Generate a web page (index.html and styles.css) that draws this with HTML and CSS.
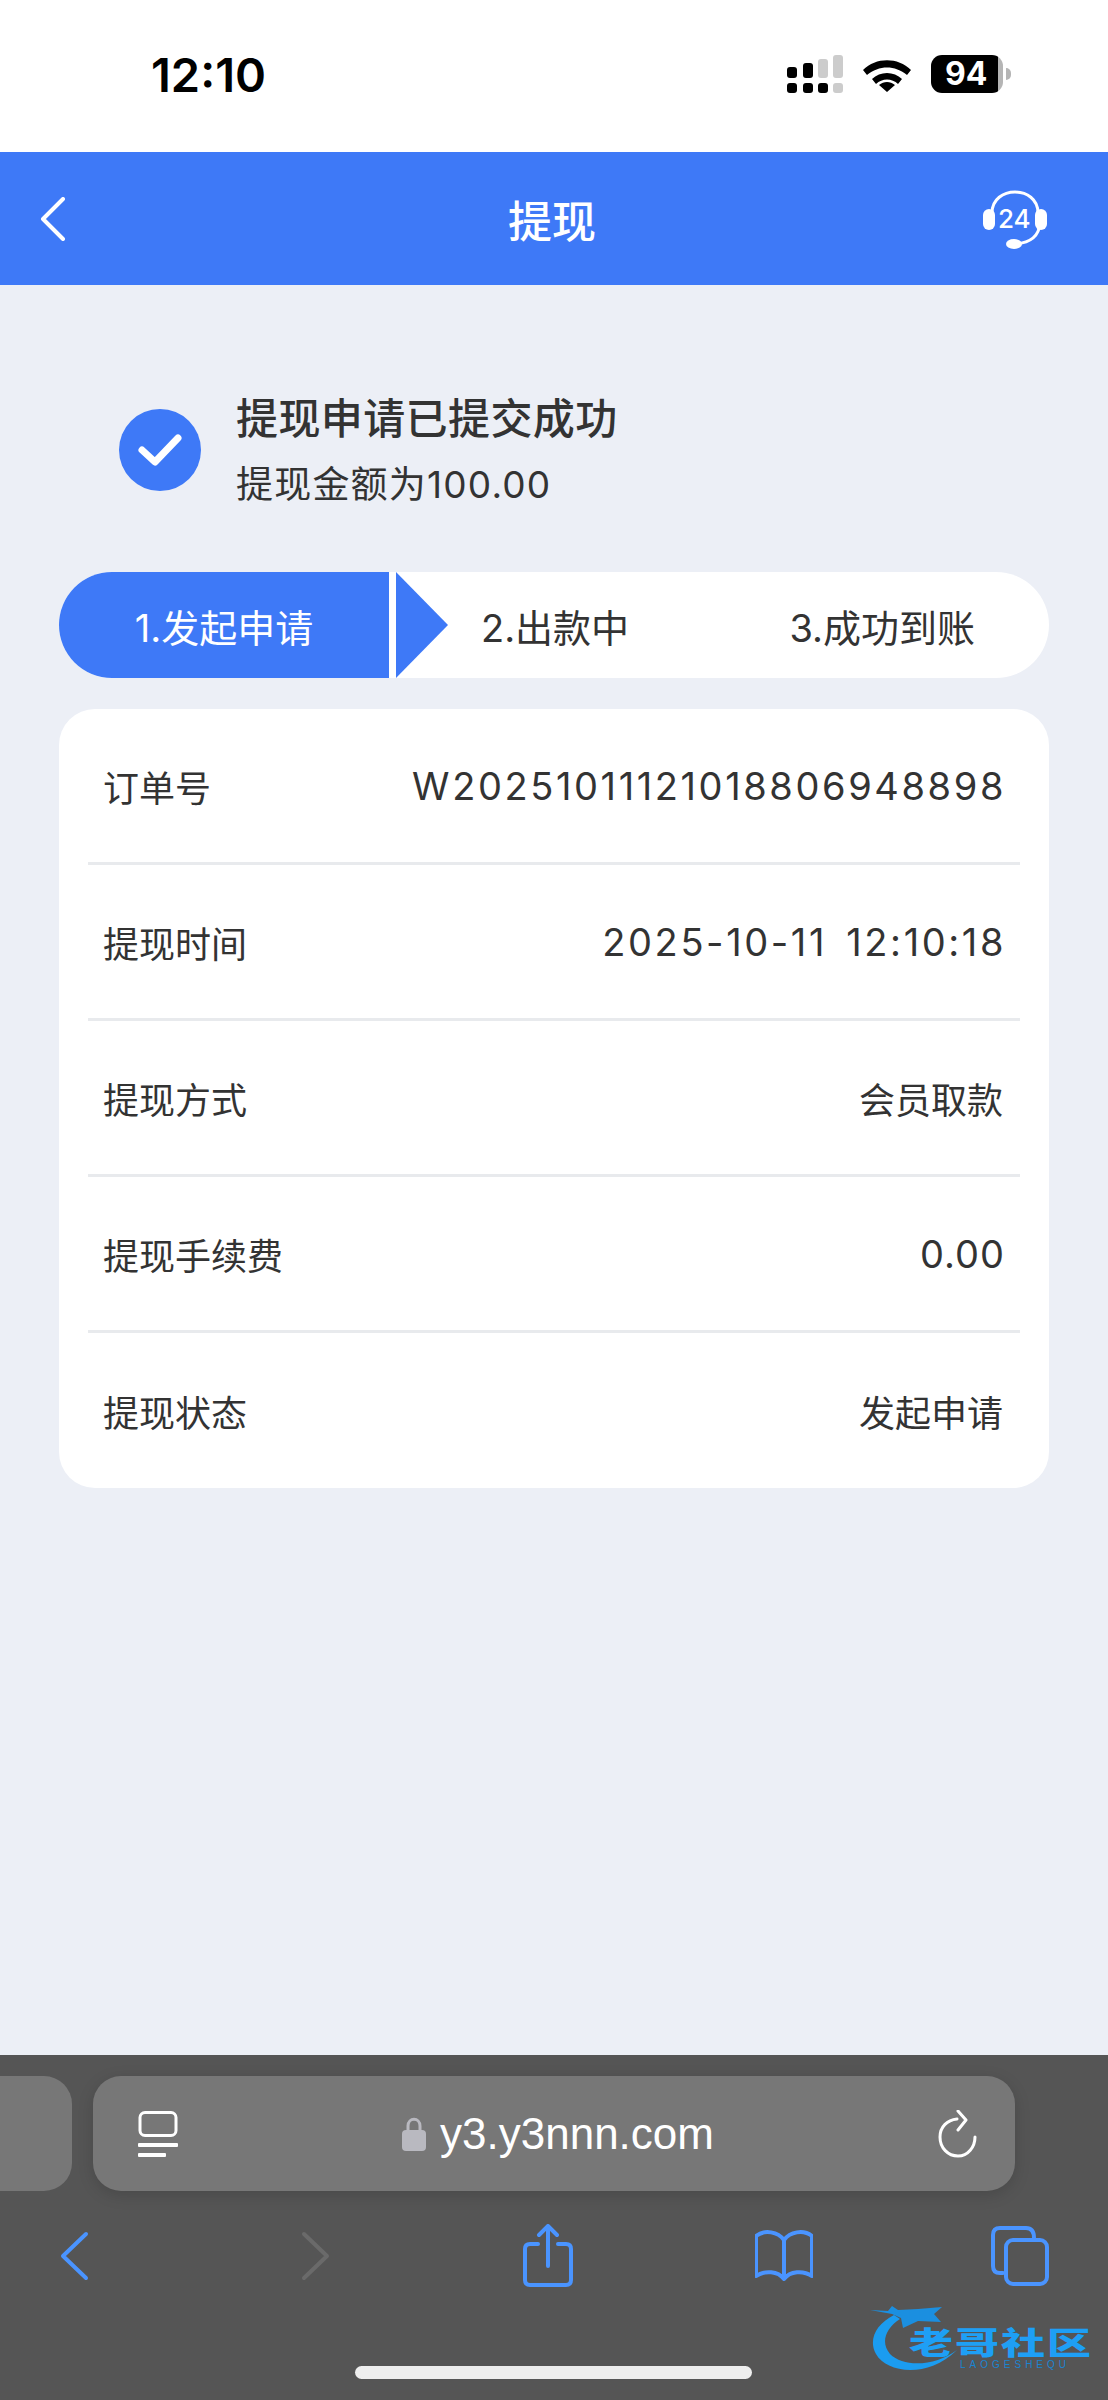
FILE: index.html
```html
<!DOCTYPE html>
<html lang="zh-CN">
<head>
    <meta charset="UTF-8">
    <meta name="viewport" content="width=device-width, initial-scale=1.0">
    <title>提现</title>
    <link rel="stylesheet" href="styles.css">
</head>
<body>
    <div class="status-bar">
        <div class="time">12:10</div>
        <div class="status-icons">
            <svg class="signal" width="56" height="38" viewBox="0 0 56 38">
                <g fill="#000">
                    <rect x="0" y="12" width="10" height="11" rx="3"/>
                    <rect x="16" y="8" width="10" height="15" rx="3"/>
                    <rect x="0" y="28" width="10" height="10" rx="3"/>
                    <rect x="16" y="28" width="10" height="10" rx="3"/>
                    <rect x="31" y="28" width="10" height="10" rx="3"/>
                </g>
                <g fill="#ccc">
                    <rect x="31" y="4" width="10" height="19" rx="3"/>
                    <rect x="46" y="0" width="10" height="23" rx="3"/>
                    <rect x="46" y="28" width="10" height="10" rx="3"/>
                </g>
            </svg>
            <svg class="wifi" width="50" height="36" viewBox="0 0 50 36">
                <path d="M1 14 C14 1 36 1 49 14 L45 19 C33 9 17 9 5 19Z M10 23 C18 15 32 15 40 23 L36 28 C30 22 20 22 14 28Z M17 29 C22 25 28 25 33 29 L25 36Z" fill="#000"/>
            </svg>
            <div class="battery">
                <div class="battery-body">94</div>
                <div class="battery-nub"></div>
            </div>
        </div>
    </div>

    <div class="nav-bar">
        <svg width="26" height="44" viewBox="0 0 26 44">
            <path d="M23 2 L3 22 L23 42" fill="none" stroke="#fff" stroke-width="4" stroke-linecap="round" stroke-linejoin="round"/>
        </svg>
        <div class="nav-title">提现</div>
        <div class="service">
            <svg width="64" height="64" viewBox="0 0 64 64">
                <path d="M9 26 C9 -2 55 -2 55 26" fill="none" stroke="#fff" stroke-width="3"/>
                <path d="M57 36 C56 50 46 56 32 57" fill="none" stroke="#fff" stroke-width="3"/>
                <rect x="0" y="22" width="12" height="21" rx="6" fill="#fff"/>
                <rect x="52" y="22" width="12" height="21" rx="6" fill="#fff"/>
                <ellipse cx="31" cy="57" rx="8" ry="5" fill="#fff"/>
            </svg>
            <span class="service-num">24</span>
        </div>
    </div>

    <div class="page">
        <div class="result">
            <div class="result-icon">
                <svg width="46" height="34" viewBox="0 0 46 34">
                    <path d="M5 17 L18 29 L41 5" fill="none" stroke="#fff" stroke-width="7" stroke-linecap="round" stroke-linejoin="round"/>
                </svg>
            </div>
            <div class="result-text">
                <div class="result-title">提现申请已提交成功</div>
                <div class="result-amount">提现金额为100.00</div>
            </div>
        </div>

        <div class="steps">
            <div class="step-active">1.发起申请</div>
            <div class="step-arrow"></div>
            <div class="step-two">2.出款中</div>
            <div class="step-three">3.成功到账</div>
        </div>

        <div class="card">
            <div class="row"><span>订单号</span><span class="num">W20251011121018806948898</span></div>
            <div class="row"><span>提现时间</span><span class="num">2025-10-11 12:10:18</span></div>
            <div class="row"><span>提现方式</span><span>会员取款</span></div>
            <div class="row"><span>提现手续费</span><span class="num-short">0.00</span></div>
            <div class="row"><span>提现状态</span><span>发起申请</span></div>
        </div>
    </div>

    <div class="browser">
        <div class="address-row">
            <div class="prev-tab"></div>
            <div class="address">
                <svg width="40" height="46" viewBox="0 0 40 46">
                    <rect x="2" y="1.5" width="36" height="23" rx="5" fill="none" stroke="#fff" stroke-width="3"/>
                    <rect x="0" y="32" width="40" height="4" rx="1" fill="#fff"/>
                    <rect x="0" y="42" width="28" height="4" rx="1" fill="#fff"/>
                </svg>
                <div class="url">
                    <svg width="24" height="34" viewBox="0 0 24 34">
                        <path d="M6 15 V9 C6 0 18 0 18 9 V15" fill="none" stroke="#b9b9c0" stroke-width="3"/>
                        <rect x="0" y="13" width="24" height="21" rx="4" fill="#b9b9c0"/>
                    </svg>
                    <span>y3.y3nnn.com</span>
                </div>
                <svg width="40" height="48" viewBox="0 0 40 48">
                    <path d="M37 27 C37 37 30 46 20 46 C10 46 2 38 2 27 C2 17 9 10 19 9" fill="none" stroke="#fff" stroke-width="3" stroke-linecap="round"/>
                    <path d="M20 1 L28 10 L20 20" fill="none" stroke="#fff" stroke-width="3" stroke-linecap="round" stroke-linejoin="round"/>
                </svg>
            </div>
        </div>
        <div class="toolbar">
            <svg width="58" height="64" viewBox="0 0 58 64">
                <path d="M41 10 L18 32 L41 54" class="tool-line"/>
            </svg>
            <svg width="58" height="64" viewBox="0 0 58 64">
                <path d="M22 10 L45 32 L22 54" class="tool-line tool-off"/>
            </svg>
            <svg width="58" height="64" viewBox="0 0 58 64">
                <path d="M20 20 H12 Q7 20 7 25 V56 Q7 61 12 61 H48 Q53 61 53 56 V25 Q53 20 48 20 H40" class="tool-line"/>
                <path d="M30 42 V2 M21 11 L30 2 L39 11" class="tool-line"/>
            </svg>
            <svg width="58" height="64" viewBox="0 0 58 64">
                <path d="M29 16 C23 8 10 5 1 12 V52 C10 46 23 47 29 55 C35 47 48 46 57 52 V12 C48 5 35 8 29 16 Z M29 16 V55" class="tool-line"/>
            </svg>
            <svg width="58" height="64" viewBox="0 0 58 64">
                <path d="M12 49 H9 Q2 49 2 42 V11 Q2 4 9 4 H35 Q43 4 43 14" class="tool-line"/>
                <rect x="15" y="16" width="41" height="44" rx="7" class="tool-line"/>
            </svg>
        </div>
        <div class="home-bar"></div>
        <div class="watermark">
            <svg width="90" height="76" viewBox="0 0 90 76">
                <path d="M26 15 C8 24 0 40 8 54 C18 72 58 80 89 50 C68 66 36 68 22 54 C12 42 18 28 32 19Z" fill="#1b9cf0"/>
                <path d="M2 10 L20 11 L24 6 L30 10 L50 9 L74 7 L66 14 L73 22 L50 21 L35 28 L33 18 L24 14Z" fill="#1b8fe0"/>
            </svg>
            <div class="wm-text">老哥社区</div>
            <div class="wm-sub">LAOGESHEQU</div>
        </div>
    </div>
</body>
</html>
```

FILE: styles.css
```css
* {
    box-sizing: border-box;
}
body {
    margin: 0;
    width: 1108px;
    height: 2400px;
    display: flex;
    flex-direction: column;
    overflow: hidden;
    background: #eceff6;
    font-family: "Inter", "Noto Sans CJK SC", sans-serif;
    color: #333;
}
svg {
    display: block;
    flex-shrink: 0;
}

/* phone status bar */
.status-bar {
    height: 152px;
    background: #fff;
    display: flex;
    justify-content: space-between;
    align-items: flex-start;
    padding: 47px 97px 0 151px;
}
.time {
    font-size: 47px;
    font-weight: 600;
    line-height: 56px;
    color: #000;
}
.status-icons {
    display: flex;
    align-items: center;
    margin-top: 8px;
}
.wifi {
    margin-left: 19px;
}
.battery {
    display: flex;
    align-items: center;
    margin-left: 19px;
}
.battery-body {
    width: 72px;
    height: 38px;
    border-radius: 11px;
    background: linear-gradient(90deg, #000 93%, #b5b5b5 93%);
    color: #fff;
    font-weight: 700;
    font-size: 32px;
    line-height: 38px;
    padding-left: 14px;
}
.battery-nub {
    width: 5px;
    height: 12px;
    margin-left: 3px;
    background: #b5b5b5;
    border-radius: 0 6px 6px 0;
}

/* blue header */
.nav-bar {
    height: 133px;
    background: #3e79f7;
    display: grid;
    grid-template-columns: 1fr auto 1fr;
    align-items: center;
    padding: 0 61px 0 40px;
}
.nav-title {
    color: #fff;
    font-size: 44px;
    font-weight: 500;
    margin-left: 17px;
}
.service {
    position: relative;
    width: 64px;
    height: 64px;
    justify-self: end;
}
.service-num {
    position: absolute;
    left: 15px;
    top: 17px;
    color: #fff;
    font-size: 26px;
    font-weight: 500;
    line-height: 30px;
}

.page {
    flex: 1;
    padding: 0 59px;
}

/* success message */
.result {
    display: flex;
    align-items: center;
    height: 150px;
    margin-top: 90px;
    padding-left: 60px;
}
.result-icon {
    width: 82px;
    height: 82px;
    border-radius: 50%;
    background: #3e79f7;
    display: flex;
    align-items: center;
    justify-content: center;
}
.result-text {
    margin-left: 35px;
}
.result-title {
    font-size: 42px;
    font-weight: 500;
    line-height: 62px;
    letter-spacing: 0.4px;
    margin-top: 4px;
}
.result-amount {
    font-size: 37px;
    line-height: 62px;
    letter-spacing: 1.2px;
    margin-top: 4px;
}

/* progress */
.steps {
    display: flex;
    align-items: center;
    width: 990px;
    height: 106px;
    margin-top: 47px;
    border-radius: 53px;
    background: #fff;
    font-size: 38px;
    overflow: hidden;
}
.step-active {
    width: 330px;
    height: 106px;
    display: flex;
    align-items: center;
    justify-content: center;
    color: #fff;
    background: #3e79f7;
}
.step-arrow {
    width: 0;
    height: 0;
    margin-left: 7px;
    border-top: 53px solid transparent;
    border-bottom: 53px solid transparent;
    border-left: 52px solid #3e79f7;
}
.step-two {
    margin-left: 33px;
}
.step-three {
    margin-left: auto;
    padding-right: 74px;
}

/* order detail */
.card {
    width: 990px;
    margin-top: 31px;
    padding: 0 29px;
    background: #fff;
    border-radius: 36px;
}
.row {
    height: 156px;
    display: flex;
    align-items: center;
    justify-content: space-between;
    padding: 0 17px 0 15px;
    border-bottom: 3px solid #e8eaed;
    font-size: 36px;
}
.row:last-child {
    height: 155px;
    border-bottom: none;
}
.num {
    font-size: 38px;
    letter-spacing: 2.6px;
    word-spacing: 6px;
    margin-right: -3px;
}
.num-short {
    font-size: 38px;
    letter-spacing: 1px;
    margin-right: -2px;
}

/* safari bottom */
.browser {
    position: relative;
    height: 345px;
    background: #555;
}
.address-row {
    display: flex;
    padding-top: 21px;
}
.prev-tab {
    width: 72px;
    height: 115px;
    background: #777;
    border-radius: 0 28px 28px 0;
}
.address {
    width: 922px;
    height: 115px;
    margin-left: 21px;
    padding: 0 37px 0 45px;
    display: flex;
    align-items: center;
    justify-content: space-between;
    background: #777;
    border-radius: 28px;
    box-shadow: 0 4px 16px rgba(0, 0, 0, 0.15);
}
.url {
    display: flex;
    align-items: center;
    gap: 14px;
    color: #fff;
    font-family: "Liberation Sans", sans-serif;
    font-size: 44px;
}
.toolbar {
    display: flex;
    justify-content: space-between;
    padding: 33px 59px 0 45px;
}
.tool-line {
    fill: none;
    stroke: #4a94ff;
    stroke-width: 4;
    stroke-linecap: round;
    stroke-linejoin: round;
}
.tool-off {
    stroke: #6a6a6a;
}
.home-bar {
    position: absolute;
    left: 355px;
    top: 311px;
    width: 397px;
    height: 13px;
    border-radius: 7px;
    background: #eee;
}
.watermark {
    position: absolute;
    left: 868px;
    top: 245px;
    width: 232px;
    height: 80px;
}
.wm-text {
    position: absolute;
    left: 41px;
    top: 22px;
    font-family: "Noto Sans CJK SC", sans-serif;
    font-weight: 900;
    font-size: 44px;
    line-height: 38px;
    letter-spacing: 2px;
    white-space: nowrap;
    color: #1e9ff5;
    transform: scaleY(0.7);
}
.wm-sub {
    position: absolute;
    left: 92px;
    top: 60px;
    color: #1b84d0;
    font-family: "Liberation Sans", sans-serif;
    font-size: 10px;
    line-height: 10px;
    letter-spacing: 4px;
}
```
